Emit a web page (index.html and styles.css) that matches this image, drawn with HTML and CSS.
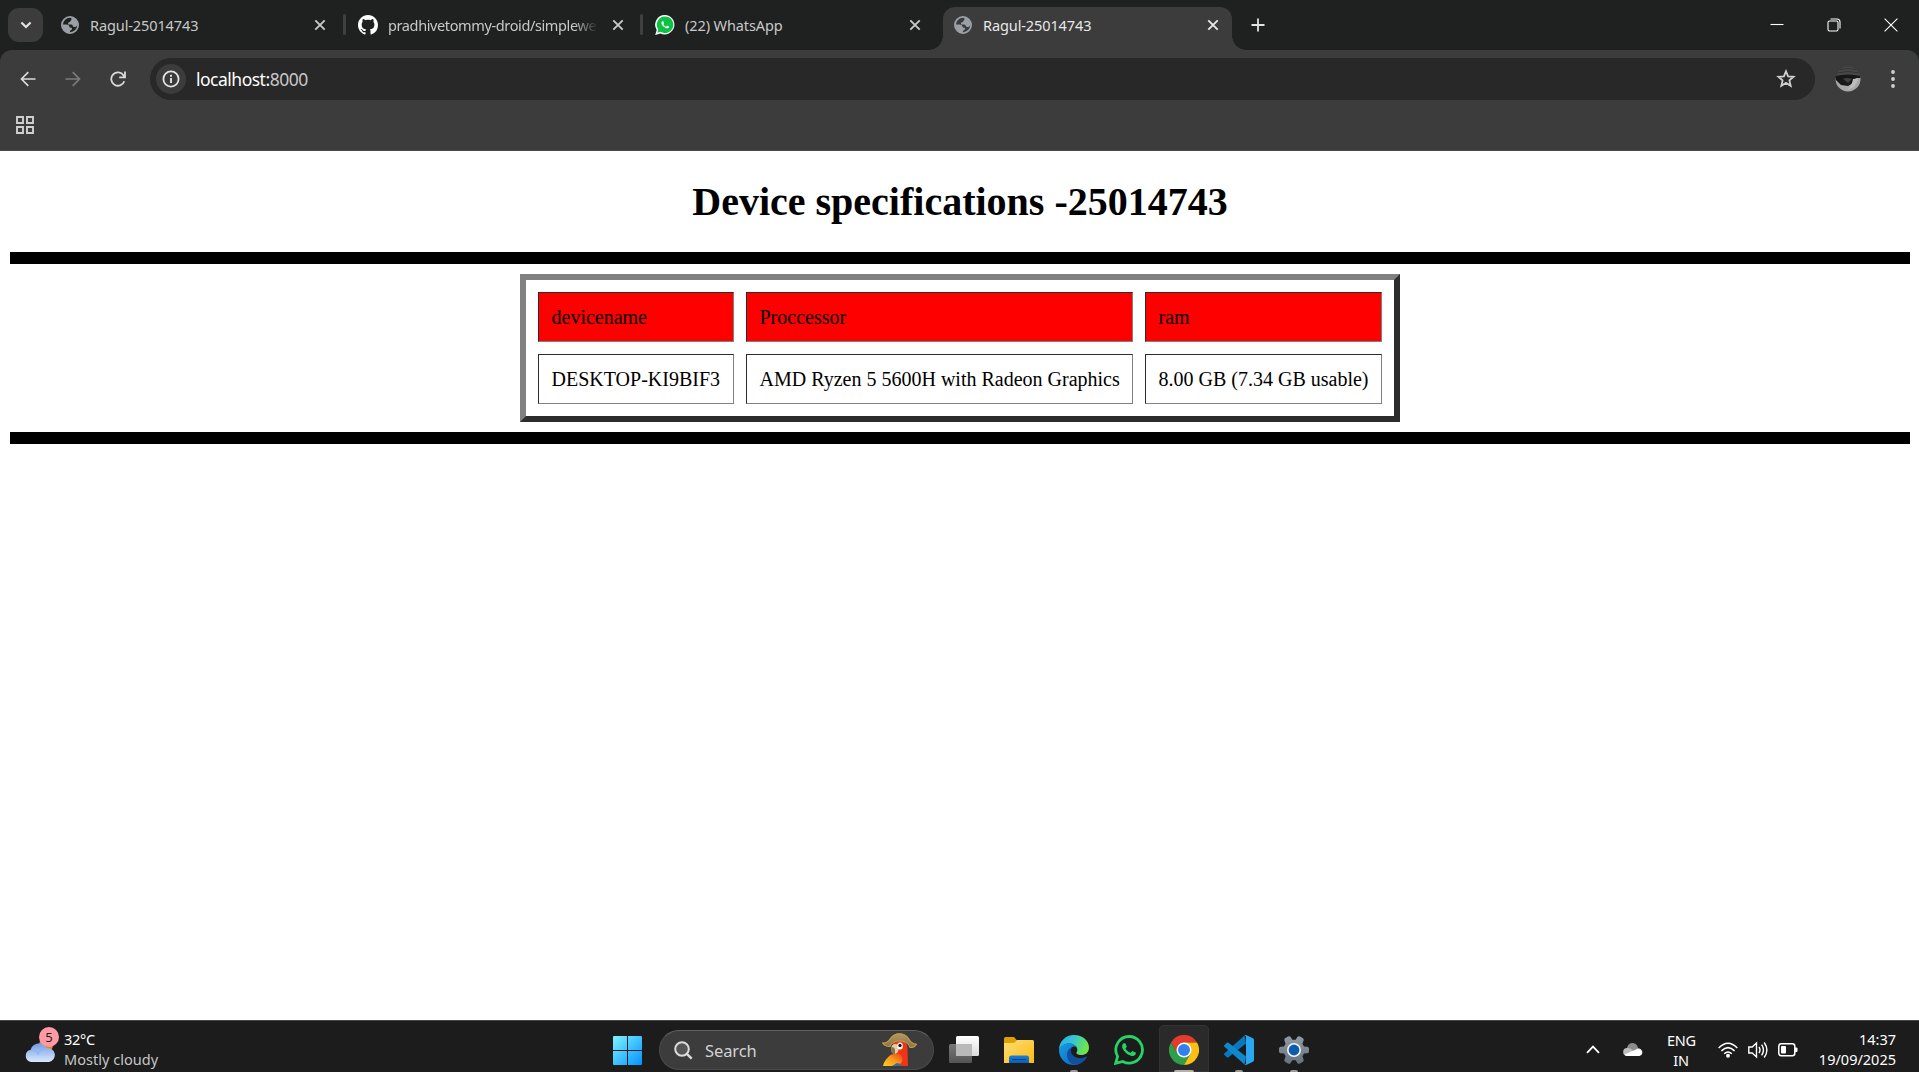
FILE: index.html
```html
<!DOCTYPE html>
<html lang="en">
<head>
<meta charset="utf-8">
<title>Ragul-25014743</title>
<link rel="stylesheet" href="styles.css">
</head>
<body>
<svg class="defs" width="0" height="0" aria-hidden="true">
  <defs>
    <linearGradient id="win" x1="0" y1="0" x2="1" y2="1"><stop offset="0" stop-color="#7df3ff"/><stop offset="1" stop-color="#0591ff"/></linearGradient>
    <linearGradient id="cloud" x1="0" y1="0" x2="0" y2="1"><stop offset="0" stop-color="#6f9de8"/><stop offset="1" stop-color="#dbe7fb"/></linearGradient>
    <linearGradient id="folder" x1="0" y1="0" x2="1" y2="1"><stop offset="0" stop-color="#ffdf75"/><stop offset="1" stop-color="#fbb914"/></linearGradient>
    <linearGradient id="tray" x1="0" y1="0" x2="0" y2="1"><stop offset="0" stop-color="#1380dc"/><stop offset="1" stop-color="#0c5fb3"/></linearGradient>
    <linearGradient id="edgeTop" x1="0" y1="0" x2="1" y2=".3"><stop offset="0" stop-color="#2aa9e8"/><stop offset=".5" stop-color="#33c6d4"/><stop offset="1" stop-color="#70e54b"/></linearGradient>
    <linearGradient id="edgeSide" x1="0" y1="0" x2="1" y2="1"><stop offset="0" stop-color="#1b9de2"/><stop offset="1" stop-color="#0a62c4"/></linearGradient>
    <linearGradient id="gear" x1="0" y1="0" x2="0" y2="1"><stop offset="0" stop-color="#929aa3"/><stop offset="1" stop-color="#68727c"/></linearGradient>
    <linearGradient id="viewFront" x1="0" y1="0" x2="0" y2="1"><stop offset="0" stop-color="#fff"/><stop offset="1" stop-color="#dcdcdc"/></linearGradient>
    <linearGradient id="viewBack" x1="0" y1="0" x2="0" y2="1"><stop offset="0" stop-color="#777"/><stop offset="1" stop-color="#555"/></linearGradient>
    <linearGradient id="wing" x1="0" y1="1" x2="1" y2="0"><stop offset="0" stop-color="#fbd21b"/><stop offset=".5" stop-color="#f99a1c"/><stop offset="1" stop-color="#ee3b16"/></linearGradient>
    <linearGradient id="hat" x1="0" y1="0" x2="0" y2="1"><stop offset="0" stop-color="#b39763"/><stop offset="1" stop-color="#8a734b"/></linearGradient>
    <symbol id="globe" viewBox="0 0 18 18">
      <circle cx="9" cy="9" r="8.1" fill="none" stroke="#9aa0a6" stroke-width="1.8"/>
      <path fill="#9aa0a6" d="M9.200 1c3.700.3 7 3.300 7.200 7.400-.5 2.200-2 2.800-3.400 2.600-1.600-.2-1-2-2.500-2.400H7.300c-.6-1.500 0-2.500 1.600-2.500.6-.8.300-1.700 1.500-2.100.4-1.300-.3-2.300-1.200-3zM1.300 8.600h4.200c1.900.1 3 1 3 2.700.4.700 2.500-.1 2.600 1.300 0 1.500-1.900 1.600-2 2.400l-.4 1.800C5 16.400 1.300 13.500 1.300 8.600z"/>
    </symbol>
    <symbol id="close" viewBox="0 0 12 12"><path d="M1.300 1.300l9.400 9.400M10.700 1.300l-9.400 9.400" fill="none" stroke="currentColor" stroke-width="1.9"/></symbol>
    <symbol id="phone" viewBox="0 0 24 24"><path d="M17.472 14.382c-.297-.149-1.758-.867-2.030-.967-.273-.099-.471-.148-.67.150-.197.297-.767.966-.940 1.164-.173.199-.347.223-.644.075-.297-.150-1.255-.463-2.390-1.475-.883-.788-1.480-1.761-1.653-2.059-.173-.297-.018-.458.130-.606.134-.133.298-.347.446-.520.149-.174.198-.298.298-.497.099-.198.050-.371-.025-.520-.075-.149-.669-1.612-.916-2.207-.242-.579-.487-.500-.669-.510-.173-.008-.371-.010-.570-.010-.198 0-.520.074-.792.372-.272.297-1.040 1.016-1.040 2.479 0 1.462 1.065 2.875 1.213 3.074.149.198 2.096 3.200 5.077 4.487.709.306 1.262.489 1.694.625.712.227 1.360.195 1.871.118.571-.085 1.758-.719 2.006-1.413.248-.694.248-1.289.173-1.413-.074-.124-.272-.198-.570-.347z"/></symbol>
  </defs>
</svg>

<div class="screen">
  <header class="browser">
    <div class="tabstrip">
      <div class="tab-search"><svg width="12" height="8" viewBox="0 0 12 8"><path d="M1.400 1.500L6 6l4.600-4.500" fill="none" stroke="#e3e3e3" stroke-width="2.200"/></svg></div>
      <div class="tabs">
        <div class="tab first">
          <svg class="favicon small"><use href="#globe"/></svg>
          <span class="title">Ragul-25014743</span>
          <svg class="close"><use href="#close"/></svg>
        </div>
        <div class="tab">
          <svg class="favicon" viewBox="0 0 16 16"><path fill="#fff" d="M8 0C3.580 0 0 3.580 0 8c0 3.540 2.290 6.530 5.470 7.590.4.070.55-.17.55-.38 0-.19-.01-.82-.01-1.490-2.010.37-2.530-.49-2.690-.94-.09-.23-.48-.94-.82-1.130-.28-.15-.68-.52-.01-.53.63-.01 1.080.58 1.230.82.72 1.210 1.870.87 2.330.66.07-.52.28-.87.51-1.070-1.780-.2-3.640-.89-3.640-3.950 0-.87.31-1.590.82-2.150-.08-.2-.36-1.020.08-2.120 0 0 .67-.21 2.200.82.64-.18 1.320-.27 2-.27s1.360.09 2 .27c1.530-1.040 2.200-.82 2.200-.82.44 1.100.16 1.920.08 2.120.51.56.82 1.270.82 2.150 0 3.070-1.870 3.750-3.650 3.950.29.25.54.73.54 1.480 0 1.070-.01 1.930-.01 2.200 0 .21.15.46.55.38A8.010 8.010 0 0 0 16 8c0-4.420-3.580-8-8-8z"/></svg>
          <span class="title long">pradhivetommy-droid/simplewe</span>
          <svg class="close"><use href="#close"/></svg>
        </div>
        <div class="tab last">
          <svg class="favicon" viewBox="0 0 20 20"><path fill="#fff" d="M10 0a9.700 9.700 0 1 1-4.600 18.400L.2 20l1.500-5.100A9.700 9.700 0 0 1 10 0z"/><path fill="#0cc143" d="M10.100 1.400a8.300 8.300 0 1 1-4.400 15.400l-3.400 1 1-3.300A8.300 8.300 0 0 1 10.100 1.400z"/><use href="#phone" x="2.700" y="2.300" width="15" height="15" fill="#fff"/></svg>
          <span class="title">(22) WhatsApp</span>
          <svg class="close"><use href="#close"/></svg>
        </div>
        <div class="tab active">
          <svg class="favicon small"><use href="#globe"/></svg>
          <span class="title">Ragul-25014743</span>
          <svg class="close"><use href="#close"/></svg>
        </div>
      </div>
      <svg class="new-tab" width="14" height="14" viewBox="0 0 14 14"><path d="M7 .5v13M.5 7h13" stroke="#e3e3e3" stroke-width="1.800"/></svg>
      <div class="window-controls">
        <svg width="14" height="14" viewBox="0 0 14 14"><path d="M.5 6.500h13" stroke="#fff" stroke-width="1.100"/></svg>
        <svg width="14" height="14" viewBox="0 0 14 14" fill="none" stroke="#fff" stroke-width="1.100"><rect x="1" y="3" width="10" height="10" rx="1.500"/><path d="M3.500 1H10a3 3 0 0 1 3 3v6.500"/></svg>
        <svg width="14" height="14" viewBox="0 0 14 14"><path d="M.6.600l12.800 12.800M13.400.600L.6 13.400" stroke="#fff" stroke-width="1.100"/></svg>
      </div>
    </div>

    <div class="toolbar">
      <div class="nav">
        <svg width="16" height="16" viewBox="0 0 16 16" fill="none" stroke="#dadada" stroke-width="1.700"><path d="M15.500 8H1.800M8.300 1.200L1.500 8l6.800 6.800"/></svg>
        <svg width="16" height="16" viewBox="0 0 16 16" fill="none" stroke="#7b7b7b" stroke-width="1.700"><path d="M.5 8h13.700M7.700 1.200L14.500 8l-6.800 6.800"/></svg>
        <svg width="16" height="16" viewBox="0 0 16 16" fill="none" stroke="#dadada" stroke-width="1.800"><path d="M14.300 10.200A6.700 6.700 0 1 1 13.600 4.400l.7 1.300M15 .5v5.800H9.200"/></svg>
      </div>
      <div class="omnibox">
        <div class="site-info"><svg width="18" height="18" viewBox="0 0 18 18"><circle cx="9" cy="9" r="7.600" fill="none" stroke="#e3e3e3" stroke-width="1.800"/><path d="M9 8v5M9 4.800v1.900" stroke="#e3e3e3" stroke-width="1.900"/></svg></div>
        <span class="url">localhost:<span class="port">8000</span></span>
        <svg class="star" width="20" height="20" viewBox="0 0 20 20"><path d="M10 2.300l2.100 5.100 5.500.4-4.200 3.600 1.300 5.400L10 13.900l-4.700 2.900 1.300-5.400-4.200-3.600 5.500-.4z" fill="none" stroke="#cfcfcf" stroke-width="1.800"/></svg>
      </div>
      <svg class="avatar" width="26" height="26" viewBox="0 0 26 26">
        <clipPath id="face"><circle cx="13" cy="13" r="12.500"/></clipPath>
        <g clip-path="url(#face)"><rect width="26" height="26" fill="#484848"/><path d="M0 12l26-2v16H0z" fill="#a8a8a8"/><path d="M2 4q11-3 22 0M1 7q12-3 24 0" fill="none" stroke="#353535"/><path d="M0 10q13-3 26 0v2l-5 0-3 5-5 3-7-1-6-6z" fill="#171717"/><path d="M8 13q4-2 9 0l-4 4z" fill="#3f3f3f"/><path d="M18 13q4-1 5 1l-4 7-7 3q5-4 6-11z" fill="#bdbdbd"/></g>
      </svg>
      <svg class="menu" width="4" height="18" viewBox="0 0 4 18" fill="#d0d0d0"><circle cx="2" cy="2" r="1.900"/><circle cx="2" cy="9" r="1.900"/><circle cx="2" cy="16" r="1.900"/></svg>
    </div>
    <div class="bookmarks">
      <svg width="18" height="18" viewBox="0 0 18 18" fill="none" stroke="#cfcfcf" stroke-width="1.900"><path d="M1 1h6v6H1zM11 1h6v6h-6zM1 11h6v6H1zM11 11h6v6h-6z"/></svg>
    </div>
  </header>

  <main class="page">
    <h1>Device specifications -25014743</h1>
    <hr>
    <table>
      <tr class="head"><td>devicename</td><td>Proccessor</td><td>ram</td></tr>
      <tr><td>DESKTOP-KI9BIF3</td><td>AMD Ryzen 5 5600H with Radeon Graphics</td><td>8.00 GB (7.34 GB usable)</td></tr>
    </table>
    <hr>
  </main>

  <footer class="taskbar">
    <div class="weather">
      <div class="weather-icon">
        <svg width="30" height="30" viewBox="0 0 30 30"><circle cx="21" cy="12" r="7" fill="#f5820b"/><path d="M6 29a6.200 6.200 0 0 1-.3-12.200A8.500 8.500 0 0 1 21.500 15 7 7 0 0 1 24 29z" fill="url(#cloud)"/><path d="M5 18q5-2 8 3 2-6 10-5" fill="none" stroke="#8fb3ef" stroke-width="1.200"/></svg>
        <span class="badge">5</span>
      </div>
      <div class="weather-text"><div>32°C</div><div class="sky">Mostly cloudy</div></div>
    </div>

    <div class="dock">
      <svg class="start" width="29" height="29" viewBox="0 0 29 29"><path fill="url(#win)" d="M1 0h13v14H0V1a1 1 0 0 1 1-1zM15 0h13a1 1 0 0 1 1 1v13H15zM0 15h14v14H1a1 1 0 0 1-1-1zM15 15h14v13a1 1 0 0 1-1 1H15z"/></svg>
      <div class="search">
        <svg width="19" height="19" viewBox="0 0 19 19" fill="none" stroke="#dcdcdc" stroke-width="2"><circle cx="8" cy="8" r="6.800" fill="#555"/><path d="M12.800 12.800l4.900 4.900" stroke-width="2.400"/></svg>
        <span>Search</span>
        <svg class="parrot" width="35" height="34" viewBox="0 0 35 34">
          <path d="M11 10q3-3 8-3 6 1 6.500 8L26 33H9l4-12z" fill="#ef3417"/>
          <path d="M1 33q1-6 8-11.500l8-1q5 3 3 8l-3 4.500z" fill="url(#wing)"/>
          <path d="M10 33l5-3 4 1-1 2z" fill="#2c6fb5"/>
          <path d="M10 12.500q3-2.500 6-.5 2 4-1 8-2 1.500-3.500 1-4-3-1.500-8.500z" fill="#dfcfa5"/><path d="M9.500 14q3 0 3.500 3v4.500q-5-1.500-3.500-7.500z" fill="#8b7044"/>
          <ellipse cx="18" cy="13" rx="2.800" ry="3.500" fill="#fff"/><circle cx="18" cy="12.500" r="1.700" fill="#171717"/>
          <path d="M0 9.500q5 1 8-4Q11 .5 17.500.5T26.500 5q3 6 8.500 6-2 3.500-7 3.500Q26 8 18 8T8 13.500Q2 14 0 9.500z" fill="url(#hat)"/>
          <path d="M.6 10q3 4 7.400 3.500Q10 8 18 8t10 6.500q5 0 6.500-3.300-5-.2-8-5.700Q23 .8 17.500.8T8.500 5.500Q5.500 10.500.6 10z" fill="none" stroke="#c29c3c" stroke-width="1.100"/>
        </svg>
      </div>
      <div class="apps">
        <div class="app"><svg width="30" height="30" viewBox="0 0 30 30"><rect y="9" width="23" height="19" rx="1.500" fill="url(#viewBack)"/><rect x="7" y="1" width="23" height="20" rx="1.500" fill="url(#viewFront)"/><path d="M7 9h16v12H8.500A1.500 1.500 0 0 1 7 19.500z" fill="#b9b9b9"/></svg></div>
        <div class="app"><svg width="30" height="30" viewBox="0 0 30 30"><path d="M0 3.500A1.500 1.500 0 0 1 1.500 2H10l3 3.500v5H0z" fill="#dda006"/><path d="M0 8h10l3-3h15.500A1.500 1.500 0 0 1 30 6.500V28H0z" fill="url(#folder)"/><path d="M5 28v-5a2.500 2.500 0 0 1 2.500-2.500h15A2.500 2.500 0 0 1 25 23v5z" fill="url(#tray)"/><path d="M8 24.500h14" stroke="#083e77"/></svg></div>
        <div class="app running"><svg width="30" height="30" viewBox="0 0 30 30">
          <path d="M0 15C0 6 7 0 15 0c9 0 15 6 15 12.500 0 5-3.500 7.500-8 7.500-3 0-5-1-4.500-2.500 1.500-2 .9-4.500-.5-6C13 7 4 7 0 15z" fill="url(#edgeTop)"/>
          <path d="M0 15C2 7.500 14 6 17.500 12c-4-1.500-7 1.500-7 6 0 6 5 10 11 10-3 2-6 2.500-9 1.800C5 29 0 22 0 15z" fill="url(#edgeSide)"/>
          <path d="M13.500 12.200c-2 1.800-2.200 5 .2 7.800 3.200 3.600 8.800 4 13.500 1.700.7-.3 1 .2.600.8-2.500 3.900-5.800 6.500-10.300 7.400C11.500 29.500 8 25 8 20c0-4 2-7 5.500-7.800z" fill="#124f9f"/>
        </svg></div>
        <div class="app"><svg width="30" height="30" viewBox="0 0 30 30"><path d="M15.200 1.500a13.300 13.300 0 1 1-6.400 25L1.700 28.300l1.900-6.900A13.300 13.300 0 0 1 15.200 1.500z" fill="none" stroke="#25d366" stroke-width="2.800"/><use href="#phone" x="1.200" y=".8" width="27.500" height="27.500" fill="#25d366"/></svg></div>
        <div class="app current running"><svg width="30" height="30" viewBox="0 0 30 30">
          <path d="M15 7.500h13A15 15 0 0 0 2 7.500l6.500 11.250z" fill="#e33b2e"/>
          <path d="M8.500 18.750L2 7.500A15 15 0 0 0 15 30l6.500-11.250z" fill="#2d9f4b"/>
          <path d="M21.500 18.750L15 30A15 15 0 0 0 28 7.500H15z" fill="#fcc012"/>
          <circle cx="15" cy="15" r="7.500" fill="#fff"/><circle cx="15" cy="15" r="6" fill="#3280f0"/>
        </svg></div>
        <div class="app running"><svg width="30" height="30" viewBox="0 0 30 30">
          <path d="M22 8.500L4.500 22.300a1.300 1.300 0 0 1-1.700-.1L.5 20a1.200 1.200 0 0 1 0-1.800L20.500.5z" fill="#0877bd"/>
          <path d="M22 21.500L4.500 7.700a1.300 1.300 0 0 0-1.700.1L.5 10a1.200 1.200 0 0 0 0 1.800l20 17.700z" fill="#1187cf"/>
          <path d="M22 0l7 3.300a1.800 1.800 0 0 1 1 1.600v20.200a1.800 1.800 0 0 1-1 1.600L22 30q-1 0-2-1 2 1 2-1V2q0-2-2-1 1-1 2-1z" fill="#29a8f1"/>
        </svg></div>
        <div class="app running"><svg width="30" height="30" viewBox="0 0 30 30">
          <path d="M11.500 1.800l1.800 3h3.400l1.800-3q1-1 2.500-.4l3 1.800q1 .8.600 2.200L23.400 8.800l1.600 2.800 3.400.1q1.600.4 1.600 1.800v3q0 1.500-1.600 1.800l-3.400.1-1.600 2.800 1.200 3.400q.4 1.400-.6 2.200l-3 1.800q-1.500.6-2.500-.4l-1.800-3h-3.400l-1.800 3q-1 1-2.500.4l-3-1.800q-1-.8-.6-2.200l1.200-3.400L5 18.400l-3.400-.1Q0 18 0 16.500v-3q0-1.400 1.600-1.800l3.400-.1 1.600-2.800-1.200-3.400q-.4-1.400.6-2.200l3-1.800q1.500-.6 2.500.4z" fill="url(#gear)"/>
          <circle cx="15" cy="15" r="7" fill="#f3f6f8"/><circle cx="15" cy="15" r="5.400" fill="#0b5cab"/>
        </svg></div>
      </div>
    </div>

    <div class="tray">
      <svg class="expand" width="14" height="9" viewBox="0 0 14 9"><path d="M1 7.800L7 1.600l6 6.200" fill="none" stroke="#fff" stroke-width="1.800"/></svg>
      <svg class="onedrive" width="20" height="14" viewBox="0 0 20 14"><path d="M4 6a5.500 5.500 0 0 1 11-1l3 4H4z" fill="#8c8c8c"/><path d="M4 13a4 4 0 0 1 .3-8q2.500-.5 4.500 1.500L16 13z" fill="#bdbdbd"/><path d="M1.500 11.500L13 6.500q3-2 5 0a3.700 3.700 0 0 1-1.500 6.500H4q-1.500 0-2.500-1.500z" fill="#fff"/></svg>
      <div class="lang"><div>ENG</div><div>IN</div></div>
      <svg class="wifi" width="20" height="16" viewBox="0 0 20 16" fill="none" stroke="#fff" stroke-width="1.500"><path d="M.7 6q9.300-9.500 18.600 0M3.400 8.900q6.600-6.600 13.200 0M6.200 11.800q3.800-3.800 7.600 0"/><circle cx="10" cy="13.800" r="1.200" fill="#fff"/></svg>
      <svg class="sound" width="20" height="18" viewBox="0 0 20 18" fill="none" stroke="#fff" stroke-width="1.400"><path d="M.8 6h3.400l4.300-4v14l-4.300-4H.8zM11 6q2 3 0 6M13.600 3.700q3.800 5.300 0 10.600M16.200 1.500q5.400 7.500 0 15"/></svg>
      <svg class="battery" width="20" height="14" viewBox="0 0 20 14"><rect x=".8" y=".8" width="16" height="12" rx="2.500" fill="none" stroke="#fff" stroke-width="1.500"/><rect x="3" y="3" width="5" height="7.600" rx="1" fill="#fff"/><path d="M17 4.500h1.500q1 0 1 1v2.600q0 1-1 1H17z" fill="#fff"/></svg>
      <div class="clock"><div>14:37</div><div>19/09/2025</div></div>
    </div>
  </footer>
</div>
</body>
</html>
```
FILE: styles.css
```css
* { box-sizing: border-box; }
body { margin: 0; background: #fff; font-family: "Noto Sans", "Open Sans", sans-serif; }
svg { display: block; flex: none; }
.defs { position: absolute; }
.screen { width: 1919px; height: 1072px; display: flex; flex-direction: column; overflow: hidden; }

/* Browser frame */
.browser { height: 151px; flex: none; background: #1f2120; }
.tabstrip { height: 50px; display: flex; align-items: flex-start; }
.tab-search { width: 35px; height: 34px; margin: 8px 5px 0 8px; border-radius: 11px; background: #3c3c3c; display: grid; place-items: center; }
.tabs { display: flex; }
.tab { width: 297px; height: 50px; padding: 0 18px 0 13px; display: flex; align-items: center; position: relative; color: #c7c9c8; }
.tab.first { padding-right: 19px; }
.tab::after { content: ""; position: absolute; right: -1px; top: 14px; width: 3px; height: 21px; border-radius: 2px; background: #3f4140; }
.tab.last::after { display: none; }
.favicon { width: 20px; height: 20px; margin-right: 10px; }
.favicon.small { width: 18px; height: 18px; margin-right: 11px; }
.title { flex: 1; overflow: hidden; white-space: nowrap; font-size: 14.500px; letter-spacing: -.1px; line-height: 22px; }
.title.long { letter-spacing: -.38px; margin-right: 14px; -webkit-mask-image: linear-gradient(90deg, #000 calc(100% - 24px), transparent); mask-image: linear-gradient(90deg, #000 calc(100% - 24px), transparent); }
.close { width: 12px; height: 12px; }
.tab.active { width: 289px; height: 43px; margin: 7px 4px 0; padding: 0 13px 7px 11px; background: #3c3c3c; border-radius: 12px 12px 0 0; color: #e8e8e8; }
.tab.active::before, .tab.active::after { content: ""; position: absolute; top: auto; bottom: 0; width: 14px; height: 14px; border-radius: 0; }
.tab.active::before { left: -14px; background: radial-gradient(circle at 0 0, transparent 13.500px, #3c3c3c 14px); }
.tab.active::after { right: -14px; background: radial-gradient(circle at 100% 0, transparent 13.500px, #3c3c3c 14px); }
.new-tab { margin: 18px 0 0 15px; }
.window-controls { margin: 18px 21px 0 auto; display: flex; gap: 43px; }

.toolbar { height: 58px; padding-top: 8px; background: #3c3c3c; border-radius: 12px 12px 0 0; display: flex; align-items: flex-start; }
.nav { width: 150px; height: 42px; padding: 0 0 1px 19.500px; display: flex; align-items: center; gap: 29px; }
.omnibox { width: 1665px; height: 42px; padding: 0 19.500px 0 6px; border-radius: 21px; background: #282828; display: flex; align-items: center; }
.site-info { width: 30px; height: 30px; border-radius: 50%; background: #3c3c3c; display: grid; place-items: center; }
.url { flex: 1; margin-left: 10px; color: #fff; font-size: 17.500px; letter-spacing: -.5px; line-height: 24px; }
.port { color: #c7c7c7; }
.avatar { margin: 7.500px 0 0 20px; }
.menu { margin: 11.500px 0 0 29.500px; }
.bookmarks { height: 43px; padding: 8px 0 0 15.500px; background: #3c3c3c; border-bottom: 1px solid #4a4a4a; }

/* Document, shown at 125% zoom */
.page { flex: 1; padding: 0 9px 0 10px; background: #fff; color: #000; font-family: "Liberation Serif", "Times New Roman", serif; font-size: 20px; }
h1 { margin: 27px 0; font-size: 40px; line-height: 47px; text-align: center; }
hr { height: 12px; margin: 10px 0; border: 0; background: #000; }
table { width: 880px; margin: 0 auto; border: 6px solid; border-color: #808080 #2c2c2c #2c2c2c #808080; border-spacing: 12px; table-layout: fixed; }
td { height: 50px; padding: 0 12.500px; border: 1px solid; border-color: #2c2c2c #808080 #808080 #2c2c2c; line-height: 22px; white-space: nowrap; }
td:nth-child(1) { width: 196px; }
td:nth-child(2) { width: 387px; }
.head td { background: #f00; }

/* Taskbar */
.taskbar { height: 52px; flex: none; display: flex; background: #1c1c1c; border-top: 1px solid #454747; color: #fff; font-size: 14.500px; }
.weather { width: 613px; padding: 8px 0 0 25px; display: flex; }
.weather-icon { position: relative; width: 30px; margin: 4px 9px 0 0; }
.badge { position: absolute; left: 14px; top: -6px; width: 20px; height: 20px; border-radius: 50%; background: #ff99a4; color: #1b1b1b; font-size: 13px; line-height: 20px; text-align: center; }
.weather-text { line-height: 20px; letter-spacing: -.3px; }
.sky { color: #c6c6c6; letter-spacing: .03px; }
.dock { display: flex; }
.start { margin: 15px 17px 0 0; }
.search { width: 275px; height: 40px; margin: 9px 5px 0 0; padding: 0 16px 0 14px; border: 1px solid #4b4b4b; border-top-color: #626262; border-radius: 20px; background: #3c3c3c; display: flex; align-items: center; color: #d2d2d2; font-size: 16.500px; letter-spacing: -.1px; }
.search span { flex: 1; margin-left: 12px; }
.apps { display: flex; gap: 5px; }
.app { width: 50px; height: 47px; margin-top: 4px; padding: 10px; position: relative; }
.app.current { background: #2a2a2a; border-radius: 5px 5px 0 0; box-shadow: inset 0 0 0 1px #333; }
.app.running::after { content: ""; position: absolute; left: 21px; bottom: 0; width: 8px; height: 2px; border-radius: 2px 2px 0 0; background: #9a9a9a; }
.app.current::after { left: 15px; width: 20px; background: #b5b0b0; }
.tray { margin-left: auto; display: flex; align-items: flex-start; padding-right: 23px; line-height: 20px; }
.expand { margin: 24px 23px 0 0; }
.onedrive { margin: 22px 24px 0 0; }
.lang { width: 28px; margin: 9px 23px 0 0; text-align: center; letter-spacing: -.3px; }
.wifi { margin: 21px 10px 0 0; }
.sound { margin: 20px 10px 0 0; }
.battery { margin: 22px 0 0; }
.clock { width: 98px; margin-top: 8px; text-align: right; letter-spacing: 0; }
```
